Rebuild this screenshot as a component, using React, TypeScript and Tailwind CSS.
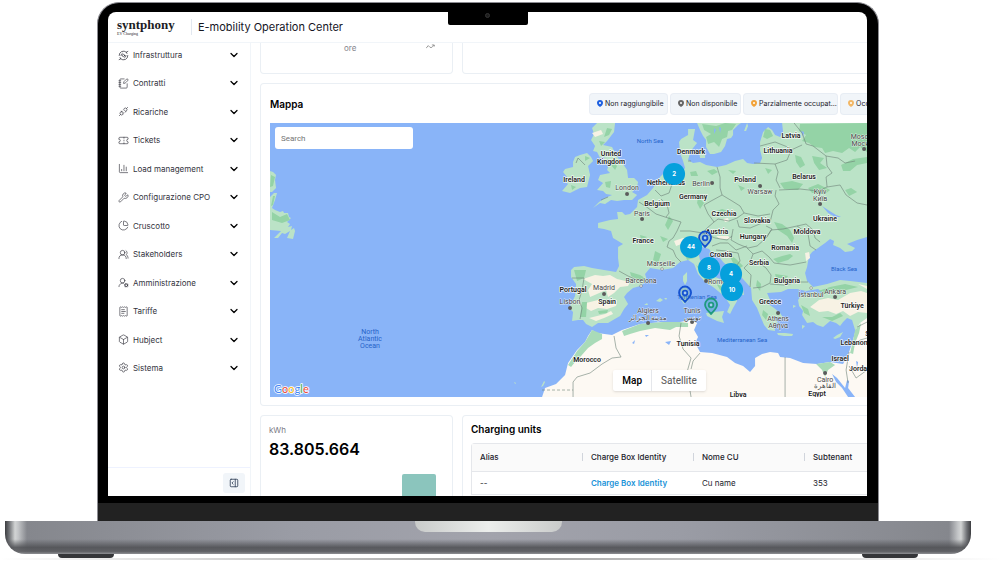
import type { ComponentType, ReactNode } from 'react';
import {
  Box,
  ChartColumn,
  ChartPie,
  ChevronDown,
  NotebookPen,
  PanelRightOpen,
  ReceiptText,
  Settings,
  Ticket,
  UserRoundCog,
  UsersRound,
  Wrench,
} from 'lucide-react';
import { TbPlugConnected } from 'react-icons/tb';

type IconProps = { className?: string; strokeWidth?: number };

function InfraIcon({ className }: IconProps) {
  return (
    <svg viewBox="0 0 24 24" className={className} fill="none" stroke="currentColor" strokeWidth="1.6" strokeLinecap="round" strokeLinejoin="round">
      <path d="M21.5 12A9.5 9.5 0 0 1 6 19.4M2.5 12A9.5 9.5 0 0 1 18 4.6" />
      <path d="M4.5 16.5 6 19.4l-3.5 1.5M19.5 7.5 18 4.6l3.5-1.5" />
      <circle cx="12" cy="12" r="2.5" />
      <path d="M6.5 12a5.5 5.5 0 0 1 3-4.900M17.5 12a5.5 5.5 0 0 1-3 4.900" />
    </svg>
  );
}

const menu: { label: string; Icon: ComponentType<IconProps> }[] = [
  { label: 'Infrastruttura', Icon: InfraIcon },
  { label: 'Contratti', Icon: NotebookPen },
  { label: 'Ricariche', Icon: TbPlugConnected },
  { label: 'Tickets', Icon: Ticket },
  { label: 'Load management', Icon: ChartColumn },
  { label: 'Configurazione CPO', Icon: Wrench },
  { label: 'Cruscotto', Icon: ChartPie },
  { label: 'Stakeholders', Icon: UsersRound },
  { label: 'Amministrazione', Icon: UserRoundCog },
  { label: 'Tariffe', Icon: ReceiptText },
  { label: 'Hubject', Icon: Box },
  { label: 'Sistema', Icon: Settings },
];

function Header() {
  return (
    <header className="flex h-[31px] items-center border-b border-slate-100 pl-[9px]">
      <div className="w-[74px] font-['Liberation_Serif',serif] text-[#1c1c24]">
        <div className="text-[13px] leading-[13px] font-bold">syntphony</div>
        <div className="text-[4px] leading-[5px]">EV Charging</div>
      </div>
      <h1 className="border-l border-slate-200 pl-[6px] text-[11px] leading-4 text-[#15151f]">E-mobility Operation Center</h1>
    </header>
  );
}

function Sidebar() {
  return (
    <aside className="flex w-[143px] shrink-0 flex-col border-r border-slate-100">
      <nav className="flex flex-1 flex-col justify-between pb-[87px]">
        {menu.map(({ label, Icon }) => (
          <button key={label} className="flex h-6 items-center gap-1 pr-[10px] pl-[10px] text-[#33333d]">
            <Icon className="size-[11px]" strokeWidth={1.4} />
            <span className="flex-1 text-left text-[8px] leading-3">{label}</span>
            <ChevronDown className="size-3 text-black" strokeWidth={2.5} />
          </button>
        ))}
      </nav>
      <div className="flex h-[29px] items-start justify-end border-t border-indigo-50 pt-[5px] pr-[5px]">
        <button aria-label="Collapse" className="flex h-5 w-[22px] items-center justify-center rounded-[3px] bg-slate-100 text-slate-700">
          <PanelRightOpen className="size-[10px]" strokeWidth={2} />
        </button>
      </div>
    </aside>
  );
}

function StatusPin({ className }: { className: string }) {
  return (
    <svg viewBox="0 0 12 14" className={'h-[7px] w-[6px] shrink-0 ' + className}>
      <path d="M6 0a6 6 0 0 1 6 6c0 3.5-3.5 6.5-6 8-2.5-1.5-6-4.500-6-8a6 6 0 0 1 6-6Z" fill="currentColor" />
      <circle cx="6" cy="5.800" r="2" fill="white" />
    </svg>
  );
}

function Chip({ color, className, children }: { color: string; className: string; children: ReactNode }) {
  return (
    <button className={'flex h-[22px] items-center gap-[2px] rounded-l-[4px] border border-slate-200/60 bg-slate-100 pl-[7px] text-[7px] leading-3 whitespace-nowrap text-[#22222c] ' + className}>
      <StatusPin className={color} />
      {children}
    </button>
  );
}

const countries: [string, number, number][] = [
  ['United', 611, 156], ['Kingdom', 611, 164], ['Ireland', 574, 182], ['Denmark', 691, 154],
  ['Latvia', 791, 138], ['Lithuania', 778, 153], ['Belarus', 804, 179], ['Poland', 745, 182],
  ['Netherlands', 666, 185], ['Germany', 693, 199], ['Belgium', 657, 206], ['Czechia', 724, 216],
  ['Slovakia', 757, 223], ['Ukraine', 825, 221], ['Austria', 717, 234], ['Hungary', 753, 239],
  ['Moldova', 807, 234], ['France', 643, 243], ['Romania', 785, 250], ['Croatia', 721, 257],
  ['Serbia', 759, 265], ['Bulgaria', 787, 283], ['Portugal', 573, 292], ['Spain', 607, 304],
  ['Greece', 770, 304], ['Türkiye', 852, 308], ['Tunisia', 688, 346], ['Morocco', 587, 362],
  ['Lebanon', 854, 345], ['Israel', 840, 361], ['Jordan', 860, 371], ['Libya', 738, 397],
  ['Egypt', 817, 396], ['Syria', 873, 336],
];

const cities: [string, number, number][] = [
  ['London', 627, 190], ['Berlin', 701, 186], ['Warsaw', 760, 194], ['Paris', 642, 216],
  ['Marseille', 661, 266], ['Barcelona', 641, 283], ['Madrid', 604, 290], ['Lisbon', 570, 304],
  ['Rome', 717, 284], ['Algiers', 648, 313], ['مدينة الجزائر', 648, 320], ['Tunis', 692, 313],
  ['تونس', 692, 320], ['Athens', 778, 321], ['Αθήνα', 778, 328], ['İstanbul', 811, 297],
  ['Ankara', 835, 294], ['Cairo', 825, 382], ['القاهرة', 825, 388], ['Kyiv', 820, 194],
  ['Київ', 820, 201], ['Moscow', 864, 139], ['Москва', 864, 146],
];

const dots: [number, number][] = [
  [627, 194], [712, 183], [760, 186], [642, 219], [604, 294], [570, 308], [706, 281],
  [648, 323], [692, 322], [778, 313], [835, 297], [825, 373], [820, 204], [864, 149],
];

const ports: [number, number][] = [[662, 269], [641, 286], [811, 288]];

const clusters: [string, number, number][] = [
  ['2', 674, 174], ['44', 691, 247], ['8', 709, 268], ['4', 731, 274], ['10', 732, 290],
];

const pins: [string, number, number][] = [
  ['#1552d0', 705, 247], ['#1552d0', 685, 302], ['#1f9a80', 711, 314],
];

function EuropeMap() {
  return (
    <svg viewBox="270 123 597 274" className="block h-auto w-full bg-[#89b4f8]" fontFamily="Roboto, 'Noto Sans', sans-serif">
      <g fill="#bbe3c7">
        {/* Newfoundland */}
        <path d="M270 171L273 172 276 175 275 180 276 188 272 192 270 192ZM270 197L274 193 277 193 275 200 272 208 275 210 280 212 283 211 284 213 288 213 289 217 291 218 287 222 290 224 288 227 292 226 291 230 294 228 295 231 293 239 287 238 290 231 285 234 282 233 278 238 274 238 281 231 270 230Z" />
        {/* British Isles */}
        <path d="M592 128L597 123 615 123 614 132 607 141 603 145 612 147 615 153 618 158 623 164 627 170 628 178 634 178 638 182 637 187 632 192 637 195 632 200 624 200 617 201 611 200 605 204 600 203 593 208 599 202 605 198 612 195 606 194 603 191 597 190 603 183 598 180 600 175 610 173 607 170 609 164 604 163 604 157 600 158 597 152 593 151 595 146 591 140 594 134Z" />
        <path d="M575 157L580 155 587 153 591 157 593 161 588 166 590 175 587 187 580 188 574 191 570 193 562 191 568 184 563 180 567 177 563 172 565 169 573 167 573 162Z" />
        {/* Scandinavia */}
        <path d="M697 123L741 123 738 125 733 130 733 135 731 138 727 139 725 146 721 152 714 154 710 154 706 147 706 140 703 136 700 130ZM744 131L747 123 748 126 746 131ZM699 152L705 151 705 158 700 158Z" />
        {/* mainland */}
        <path d="M598 223L610 220 618 219 617 212 622 212 625 215 630 214 637 207 638 200 647 195 653 188 660 177 664 173 670 172 682 172 685 168 683 161 680 153 679 142 681 139 688 135 688 129 695 129 693 140 697 143 693 148 690 153 688 160 693 163 700 162 706 165 717 167 726 165 735 161 743 159 747 163 753 164 760 163 762 158 760 150 760 142 763 132 768 127 772 130 775 135 780 137 783 132 782 123 867 123 867 237 857 240 847 244 855 248 852 251 845 252 840 248 833 245 834 241 830 239 825 243 818 248 812 252 809 256 807 267 805 273 807 281 813 287 827 284 840 280 850 281 867 283 867 330 855 330 852 320 847 318 843 322 840 326 836 323 830 321 823 327 817 325 813 322 807 323 802 315 803 311 799 306 798 300 802 294 812 292 822 292 818 289 806 291 797 289 788 289 781 292 767 293 770 300 767 303 774 308 780 313 784 319 778 318 772 316 778 323 774 325 775 331 768 330 764 325 761 318 757 308 752 300 751 288 742 278 732 270 723 262 717 254 712 253 709 249 702 247 698 252 700 260 710 268 715 277 725 281 731 282 743 290 744 295 736 293 737 301 733 308 730 314 727 312 730 305 724 296 713 287 705 282 698 274 694 264 688 260 680 262 673 268 662 270 650 268 645 274 647 281 640 286 633 288 627 293 624 297 628 304 624 309 620 316 613 320 608 323 598 323 592 327 586 324 583 320 578 320 572 321 573 312 569 308 575 296 576 284 571 277 571 270 574 267 584 266 592 268 604 270 616 272 619 266 618 258 618 247 623 244 613 238 611 231 604 229 598 228Z" />
        {/* islands */}
        <path d="M683 276L687 272 687 281 685 285 683 281ZM681 288L686 287 689 292 688 301 684 304 681 300ZM706 313L713 312 724 311 722 317 724 323 717 321 707 316ZM777 333L785 333 793 334 792 336 784 336 778 335ZM833 338L837 335 843 332 840 337 835 339ZM656 301L660 298 663 300 660 302ZM644 305L647 303 648 305ZM664 298L667 298 666 300ZM802 325L805 326 802 329ZM793 305L796 306 793 308ZM514 382L516 383 515 384ZM541 387L544 381 545 382 543 386Z" />
      </g>
      {/* North Africa and the Levant */}
      <path d="M542 397L545 388 556 384 565 375 568 363 577 350 585 342 588 336 592 330 597 333 612 335 622 330 640 324 663 322 680 322 690 320 697 323 694 330 698 337 695 343 700 352 712 353 727 357 735 363 743 366 750 372 755 366 755 358 762 354 770 352 778 353 780 357 790 358 803 363 817 364 830 362 843 364 849 352 852 343 856 329 860 323 867 318 867 397Z" fill="#fdf9f3" />
      {/* Atlas forests, Nile delta and the Levant coast */}
      <path d="M592 330L602 334 602 339 595 343 588 348 581 356 575 362 571 367 568 365 577 351 585 342ZM622 331L640 324 663 322 680 322 688 323 688 327 676 327 670 330 655 328 640 331 630 334 624 336ZM816 364L830 362 835 365 828 370 825 377 822 370ZM850 353L853 340 855 330 861 323 859 333 855 343 853 354Z" fill="#a9dbb8" />
      {/* dry areas */}
      <path d="M583 279L595 275 603 276 610 275 617 279 630 282 628 286 620 287 614 293 608 297 606 290 597 294 590 297 588 290 592 284ZM586 303L598 300 605 304 617 300 616 306 607 309 598 308 591 311 586 308ZM589 318L597 316 605 314 611 311 613 314 604 318 596 321ZM819 300L828 298 838 300 850 293 861 291 867 293 867 313 858 312 850 316 843 311 836 314 828 311 819 312 810 307ZM858 284L867 286 867 289ZM674 241L683 238 689 240 684 243 676 246ZM805 253L809 252 810 258 806 261ZM592 133L601 130 603 134 595 137ZM723 219L728 218 729 221 725 222ZM716 236L728 236 731 239 720 239Z" fill="#f7f2e4" />
      {/* forests */}
      <g fill="#94d3a6">
        <path d="M702 124L716 126 725 123 736 124 732 130 728 131 727 137 722 139 719 147 714 142 708 144 706 137 711 134 704 130ZM765 129L770 130 773 136 767 139 763 137ZM800 124L867 123 867 152 860 147 855 152 849 148 842 153 833 151 825 153 822 148 814 147 809 143 802 141 806 135 799 131ZM795 155L801 157 805 165 800 168 796 162ZM812 156L824 158 820 163 827 168 819 170 814 163ZM841 165L853 159 867 157 867 163 857 165 850 171 843 171ZM780 183L792 181 803 184 798 190 784 189ZM808 188L818 184 830 190 825 194 812 193ZM845 190L851 188 857 192 849 196Z" />
        <path d="M707 171L714 169 718 172 712 175ZM690 172L696 171 698 176 691 176ZM698 197L704 203 700 209 697 203ZM738 185L745 188 741 191ZM728 170L736 171 733 174ZM765 168L772 170 768 174ZM722 209L731 212 724 215 717 211ZM669 216L673 221 668 230 665 225ZM655 251L661 254 658 263 653 260ZM774 222L782 224 790 230 794 238 792 243 787 236 778 230ZM773 259L782 256 790 254 793 256 788 260 778 263ZM728 253L736 259 743 266 740 268 733 263ZM775 274L788 276 784 280 776 278ZM757 280L761 284 760 291 756 286ZM818 291L830 287 845 284 858 287 846 290 832 291 823 295ZM630 272L640 275 645 278 640 281 631 276ZM574 270L586 270 584 278 577 281ZM582 302L587 302 586 317 580 317ZM598 311L608 310 607 313 599 314ZM696 265L701 269 709 280 705 280ZM685 255L694 258 687 260ZM640 235L647 237 641 240ZM660 236L668 239 663 242Z" />
        <path d="M607 128L612 129 609 135 604 137ZM599 141L605 142 601 146ZM612 160L617 166 615 170 611 165ZM605 182L611 181 610 188 606 187ZM585 156L590 158 585 161ZM571 185L576 187 572 190ZM271 175L275 177 273 186 270 187ZM272 212L280 217 287 214 290 220 282 223 272 220ZM273 196L275 196 273 205 271 206ZM801 305L808 309 810 316 804 313ZM822 317L832 317 840 313 843 316 832 321ZM716 283L722 287 726 294 720 290ZM763 310L768 314 766 320 762 315Z" />
      </g>
      {/* Red Sea and lakes */}
      <path d="M832 374L837 378 845 388 847 380 849 381 848 388 855 397 848 397 842 388 836 382ZM856 361L858 362 857 368ZM632 343L635 340 634 344ZM665 342L671 341 669 345ZM645 335L649 335 646 337ZM714 128L716 130 714 134ZM719 127L721 128 720 133ZM801 131L804 132 803 137ZM822 206L828 210 836 215 841 217 835 217 828 213ZM816 291L823 292 818 294Z" fill="#89b4f8" />
      <g fill="none" stroke="#6d8277" strokeWidth="0.6" strokeLinejoin="round">
        <path d="M639 202L648 208 656 214 668 218 681 222 677 231 673 238 669 241 667 247 673 250 676 257 681 262M655 190L661 196 669 193 672 184M661 199L667 205 669 213 666 217M688 161L691 161M717 167L720 177 720 188 722 195M722 195L711 201 704 205 708 214 714 222 707 228 703 233 690 231 680 231M722 195L732 201 740 206 744 213 737 218 729 221 718 219 714 222M744 213L758 216 770 214M737 220L739 227 750 228 762 223 770 222M733 229L731 240 738 244 748 248 757 246 766 238 772 229 766 226M703 233L715 238 727 240 732 236M712 246L720 243 728 243 736 250 747 246M716 250L726 251 738 253 740 261 736 266M747 248L753 254 750 262 744 268 751 275 750 287M753 254L762 251 769 257 774 263 790 265 806 262M758 262L766 268 771 275 770 283 762 287 753 288M770 284L784 285 799 282 808 282M766 238L771 230 783 229 797 226 808 234 810 246 816 250M797 226L806 224 813 230 815 238 820 242M770 222L773 210 779 204 775 196 776 190M779 190L800 189 818 191 827 187 826 177 832 173 827 166 826 156 813 146 806 144 802 133 794 123M754 163L775 164 778 172 776 180 780 188M775 164L787 160 791 150 802 145M760 146L775 142 790 148M827 187L840 185 846 195 857 203 867 205M826 156L838 158 845 163 855 161M572 278L584 278 582 290 579 300 582 308 580 319M619 271L628 276 637 280 646 280M576 163L578 158 585 165M601 200L608 197M681 323L679 336 683 349 691 358 687 372 691 397M700 353L693 361 691 369M785 357L785 397M614 336L616 348 621 357 612 358 602 364 590 373 577 377 573 382 573 397M853 345L860 340 867 338M849 352L846 370 848 383M849 366L856 378 867 370M857 327L867 322" />
        <path d="M542 390L573 390" strokeDasharray="3 2" />
      </g>
      <g fill="#5b5b5b">
        {dots.map(([x, y]) => (
          <circle key={x + '-' + y} cx={x} cy={y} r="2" />
        ))}
      </g>
      <g fill="white" stroke="#5b5b5b" strokeWidth="0.5">
        {ports.map(([x, y]) => (
          <circle key={x + '-' + y} cx={x} cy={y} r="1.3" />
        ))}
      </g>
      <g textAnchor="middle" fontSize="7" fill="#2563c9">
        <text x="650" y="143" fontSize="6">North Sea</text>
        <text x="844" y="271" fontSize="6">Black Sea</text>
        <text x="742" y="342" fontSize="6">Mediterranean Sea</text>
        <text x="697" y="299" fontSize="6">Tyrrhenian Sea</text>
        <text x="370" y="334">North</text>
        <text x="370" y="341">Atlantic</text>
        <text x="370" y="348">Ocean</text>
      </g>
      <g textAnchor="middle" fontSize="7" paintOrder="stroke" stroke="white" strokeLinejoin="round">
        {cities.map(([name, x, y]) => (
          <text key={name} x={x} y={y} strokeWidth="1" strokeOpacity="0.7" fill="#454545">{name}</text>
        ))}
        {countries.map(([name, x, y]) => (
          <text key={name} x={x} y={y} fontWeight="600" strokeWidth="1.5" strokeOpacity="0.8" fill="#1f1f1f">{name}</text>
        ))}
      </g>
      {pins.map(([color, x, y]) => (
        <g key={x + '-' + y} fill="none" stroke={color} strokeWidth="1.8" strokeLinejoin="round">
          <path d={`M${x} ${y}c-2-3-6-5-6-9.5a6 6 0 0 1 12 0c0 4.5-4 6.5-6 9.5z`} fill={color} fillOpacity="0.2" />
          <circle cx={x} cy={y - 9} r="2.3" fill="#a7cdf0" />
        </g>
      ))}
      {clusters.map(([count, x, y]) => (
        <g key={count}>
          <circle cx={x} cy={y} r="11" fill="#05a0dc" />
          <text x={x} y={y + 2} textAnchor="middle" fontSize="6" fontWeight="700" fontFamily="Inter, sans-serif" fill="white">{count}</text>
        </g>
      ))}
      <text x="274" y="393" fontSize="11" fontFamily="Lato, sans-serif" paintOrder="stroke" stroke="white" strokeWidth="1.5" strokeLinejoin="round">
        <tspan fill="#4285f4">G</tspan>
        <tspan fill="#ea4335">o</tspan>
        <tspan fill="#fbbc05">o</tspan>
        <tspan fill="#4285f4">g</tspan>
        <tspan fill="#34a853">l</tspan>
        <tspan fill="#ea4335">e</tspan>
      </text>
    </svg>
  );
}

function MapCard() {
  return (
    <section className="rounded-l-[4px] border border-r-0 border-slate-200/70 pb-2 pl-[9px]">
      <div className="flex h-[39px] items-center justify-between">
        <h2 className="text-[10px] leading-4 font-semibold text-black">Mappa</h2>
        <div className="flex gap-[2px]">
          <Chip color="text-[#1d5fe0]" className="w-[79px] rounded-r-[4px]">Non raggiungibile</Chip>
          <Chip color="text-[#666666]" className="w-[71px] rounded-r-[4px]">Non disponibile</Chip>
          <Chip color="text-[#f2a33a]" className="w-[95px] rounded-r-[4px]">Parzialmente occupat...</Chip>
          <Chip color="text-[#f2b765]" className="w-[27px] overflow-hidden border-r-0">Occupato</Chip>
        </div>
      </div>
      <div className="relative">
        <EuropeMap />
        <input
          type="text"
          aria-label="Search"
          placeholder="Search"
          className="absolute top-1 left-[5px] h-[22px] w-[138px] rounded-[3px] bg-white px-[6px] font-[Roboto,sans-serif] text-[8px] placeholder:text-[#757575]"
        />
        <div className="absolute right-[27%] bottom-[6px] flex h-[21px] rounded-[2px] bg-white font-[Roboto,sans-serif] text-[10px] shadow">
          <button className="border-r border-gray-200 px-[9px] font-medium text-black">Map</button>
          <button className="px-[9px] text-[#565656]">Satellite</button>
        </div>
      </div>
    </section>
  );
}

function KwhCard() {
  return (
    <section className="flex w-[193px] shrink-0 flex-col justify-between rounded-t-[4px] border border-b-0 border-slate-200/70 px-2 pt-2">
      <div>
        <p className="text-[8px] leading-3 text-[#7b7b85]">kWh</p>
        <p className="mt-[3px] text-base leading-5 font-semibold text-black">83.805.664</p>
      </div>
      <div className="mr-2 h-[22px] w-[34px] self-end rounded-t-[2px] bg-[#8bc5bd]" />
    </section>
  );
}

function UnitsCard() {
  return (
    <section className="min-w-0 flex-1 rounded-tl-[4px] border border-r-0 border-b-0 border-slate-200/70 pl-2">
      <h2 className="pt-[5px] pb-[6px] text-[10px] leading-4 font-semibold text-black">Charging units</h2>
      <div className="rounded-tl-[4px] border-t border-l border-gray-200">
        <table className="w-full table-fixed text-left text-[8px] leading-3 text-[#22222c]">
          <thead>
            <tr className="h-[27px] border-b border-gray-200 bg-[#fafafa]">
              {['Alias', 'Charge Box Identity', 'Nome CU'].map((name) => (
                <th key={name} className="w-[111px] pl-2 font-medium">
                  <div className="flex items-center justify-between">
                    {name}
                    <span className="h-2 w-px bg-gray-300" />
                  </div>
                </th>
              ))}
              <th className="pl-2 font-medium">Subtenant</th>
            </tr>
          </thead>
          <tbody>
            <tr className="h-[23px] border-b border-gray-200">
              <td className="pl-2">--</td>
              <td className="pl-2">
                <a href="#charge-box" className="font-semibold text-[#1a93d8]">Charge Box Identity</a>
              </td>
              <td className="pl-2">Cu name</td>
              <td className="pl-2">353</td>
            </tr>
          </tbody>
        </table>
      </div>
    </section>
  );
}

function Dashboard() {
  return (
    <main className="flex min-w-0 flex-1 flex-col gap-[9px] pl-[9px]">
      <div className="flex gap-[9px]">
        <div className="flex h-[31px] w-[193px] justify-between rounded-b-[4px] border border-t-0 border-slate-200/70 pr-[17px] pl-[83px] text-[8px] leading-[10px] text-[#85858d]">
          ore
          <svg viewBox="0 0 10 5" className="mt-px h-[5px] w-[9px]" fill="none" stroke="#777777" strokeWidth="0.8">
            <path d="M0 4.5 2.5 1.5 4.5 3.5 6.5 3.5 9 1M6.5 0.8H9.2V2.5" />
          </svg>
        </div>
        <div className="h-[31px] flex-1 rounded-bl-[4px] border border-t-0 border-r-0 border-slate-200/70" />
      </div>
      <MapCard />
      <div className="flex min-h-[81px] gap-[9px]">
        <KwhCard />
        <UnitsCard />
      </div>
    </main>
  );
}

export default function App() {
  return (
    <div className="overflow-hidden bg-white pt-[2px] font-[Inter,sans-serif]">
      <div className="mr-[2.9%] ml-[0.5%]">
        {/* lid */}
        <div className="mx-[9.52%] overflow-hidden rounded-t-[22px] border border-b-0 border-[#8d8d93] bg-black pt-[9px]">
          <div className="relative mr-[11px] ml-[10px] overflow-hidden rounded-t-[8px] bg-white">
            <Header />
            <div className="flex">
              <Sidebar />
              <Dashboard />
            </div>
            <div className="absolute top-0 left-1/2 flex h-[13px] w-20 -translate-x-1/2 justify-center rounded-b-[2px] bg-black pt-px">
              <span className="size-[5px] rounded-full border border-[#333333] bg-[#1c1c1c]" />
            </div>
          </div>
          <div className="mt-[7px] h-[18px] bg-[#222222]" />
        </div>
        {/* base */}
        <div className="flex h-[33px] justify-center rounded-b-[20px] bg-[linear-gradient(to_bottom,transparent_55%,#515256e6_80%,#5a5b5fe6_92%,#8e8f93_100%),linear-gradient(to_right,#3c3d40_0px,#6d6f73_4px,#d2d4d4_10px,#c4c6c8_13px,#85878d_22px,#9a9ca5_30%,#a2a3ac_50%,#9a9ca5_70%,#85878d_calc(100%-22px),#c4c6c8_calc(100%-13px),#d2d4d4_calc(100%-10px),#6d6f73_calc(100%-4px),#3c3d40_100%)]">
          <div className="h-[11px] w-[147px] rounded-b-[10px] bg-linear-to-r from-[#c9cbca] via-[#eceeec] to-[#c9cbca]" />
        </div>
        <div className="flex justify-between px-[5.5%]">
          <div className="h-1 w-14 rounded-b-[4px] bg-[#353639]" />
          <div className="h-1 w-14 rounded-b-[4px] bg-[#353639]" />
        </div>
      </div>
      <div className="h-[2px] bg-linear-to-r from-white via-[#a0a0a0] to-white" />
    </div>
  );
}
